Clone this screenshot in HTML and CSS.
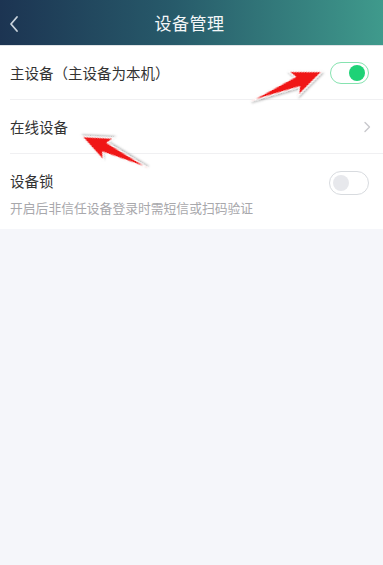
FILE: index.html
```html
<!DOCTYPE html>
<html lang="zh">
<head>
<meta charset="utf-8">
<link rel="stylesheet" href="styles.css">
</head>
<body>
<div class="page">
  <header class="topbar">
    <svg class="back" width="12" height="18" viewBox="0 0 12 18"><path d="M9 2 L3 9 L9 16" fill="none" stroke="#c9d3dc" stroke-width="1.8" stroke-linecap="round" stroke-linejoin="round"/></svg>
    <h1 class="title">设备管理</h1>
  </header>
  <section class="list">
    <div class="row row-main">
      <span class="label">主设备（主设备为本机）</span>
      <span class="switch on"><span class="knob"></span></span>
    </div>
    <div class="row row-online">
      <span class="label">在线设备</span>
      <svg class="chev" width="8" height="12" viewBox="0 0 8 12"><path d="M2 1.5 L6.5 6 L2 10.5" fill="none" stroke="#c8c8cc" stroke-width="1.4" stroke-linecap="round" stroke-linejoin="round"/></svg>
    </div>
    <div class="row row-lock">
      <div class="lock-text">
        <span class="label">设备锁</span>
        <span class="sub">开启后非信任设备登录时需短信或扫码验证</span>
      </div>
      <span class="switch off"><span class="knob"></span></span>
    </div>
  </section>
  <svg class="arrows" width="383" height="565" viewBox="0 0 383 565">
    <defs>
      <filter id="sh" x="-20%" y="-40%" width="140%" height="180%">
        <feDropShadow dx="0" dy="1.5" stdDeviation="1.2" flood-color="#000" flood-opacity="0.35"/>
      </filter>
      <polygon id="arw" points="0,0 50,-5.5 46,-13 77,0 46,13 50,5.5" fill="#f01818" stroke="#ffffff" stroke-width="1.2" stroke-linejoin="miter"/>
    </defs>
    <use href="#arw" filter="url(#sh)" transform="translate(251,101) rotate(-22.5)"/>
    <use href="#arw" filter="url(#sh)" transform="translate(148,168) rotate(-154.5) scale(0.95)"/>
  </svg>
</div>
</body>
</html>
```
FILE: styles.css
```css
* { box-sizing: border-box; }
html, body { margin: 0; padding: 0; }
body {
  width: 383px;
  height: 565px;
  overflow: hidden;
  background: #f5f6fa;
  font-family: "Noto Sans CJK SC", "Noto Sans", sans-serif;
}
.page { position: relative; width: 383px; height: 565px; }
.topbar {
  height: 46px;
  background: linear-gradient(90deg, #1c3452 0%, #275a6a 45%, #3f9a8c 100%);
  display: flex;
  align-items: center;
  justify-content: center;
  position: relative;
  border-bottom: 1px solid #dfe3e6;
}
.back { position: absolute; left: 8px; top: 15px; }
.title {
  margin: 0;
  font-size: 17px;
  font-weight: 400;
  color: #f4f7f8;
  letter-spacing: 0.5px;
  margin-left: -4px;
}
.list { background: #ffffff; }
.row {
  display: flex;
  align-items: center;
  justify-content: space-between;
  margin-left: 10px;
  padding-right: 14px;
}
.row-main { height: 54px; border-bottom: 1px solid #f0f0f2; }
.row-online { height: 54px; border-bottom: 1px solid #f0f0f2; padding-right: 12px; }
.row-lock { height: 75px; align-items: flex-start; }
.label { font-size: 14.5px; color: #333333; }
.lock-text { display: flex; flex-direction: column; gap: 7px; padding-top: 16px; }
.sub { font-size: 12.8px; color: #a8a8ac; }
.switch {
  width: 39px;
  height: 22px;
  border-radius: 11px;
  display: flex;
  align-items: center;
  padding: 0 3px;
}
.switch .knob { width: 16px; height: 16px; border-radius: 50%; }
.switch.on { border: 1.5px solid #86e3b0; justify-content: flex-end; }
.switch.on .knob { background: #1ed276; }
.switch.off { border: 1.5px solid #d8dbdf; justify-content: flex-start; margin-top: 17px; width: 40px; height: 24px; border-radius: 12px; }
.switch.off .knob { background: #e7e8ec; }
.arrows { position: absolute; left: 0; top: 0; pointer-events: none; }
```
